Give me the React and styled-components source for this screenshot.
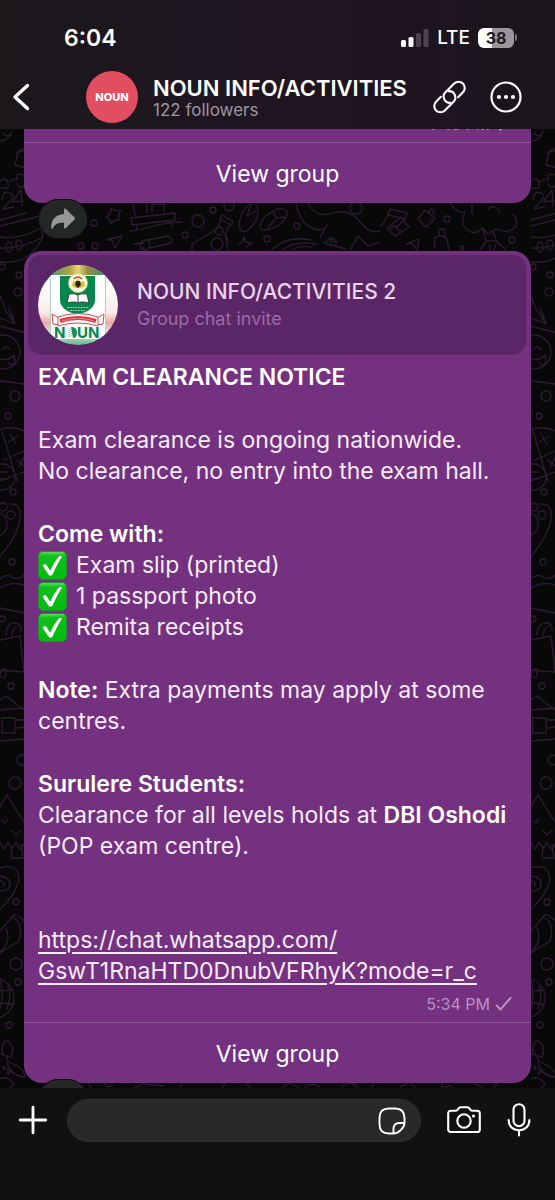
import React from "react";
import styled, { createGlobalStyle } from "styled-components";

const GlobalStyle = createGlobalStyle`
  *, *::before, *::after { box-sizing: border-box; }
  body {
    margin: 0;
    background: #111111;
    font-family: Inter, "Liberation Sans", sans-serif;
    color: #ffffff;
  }
  p, h1, h2 { margin: 0; }
`;

const Screen = styled.div`
  display: flex;
  flex-direction: column;
  height: 100vh;
  overflow: hidden;
`;

const TopBar = styled.header`
  flex: none;
  background: linear-gradient(90deg, #1b171b 0%, #1d161f 30%, #1e1420 70%, #1b151c 100%);
`;

const StatusBar = styled.div`
  display: flex;
  align-items: center;
  height: 70px;
  padding: 5px 38px 0 64px;
`;

const Clock = styled.time`
  flex: 1;
  font-size: 23px;
  line-height: 28px;
  font-weight: 600;
`;

const Network = styled.span`
  margin: 0 8px;
  font-size: 19px;
  line-height: 24px;
  font-weight: 500;
`;

const Battery = styled.div`
  width: 36px;
  height: 20px;
  border-radius: 6px;
  background: linear-gradient(90deg, #ffffff 38%, #9b969c 38%);
  color: #1e1820;
  font-size: 16px;
  line-height: 20px;
  font-weight: 700;
  text-align: center;
`;

const BatteryTip = styled.span`
  width: 2px;
  height: 7px;
  margin-left: 1px;
  border-radius: 0 2px 2px 0;
  background: #77717a;
`;

const ChannelBar = styled.div`
  display: flex;
  align-items: center;
  height: 59px;
  padding: 0 32px 5px 8px;
`;

const IconButton = styled.button`
  display: flex;
  align-items: center;
  justify-content: center;
  flex: none;
  width: ${(p) => p.$width || 34}px;
  height: 34px;
  padding: 0;
  border: 0;
  background: none;
  color: #ffffff;
  cursor: pointer;
`;

const ChannelAvatar = styled.div`
  flex: none;
  width: 52px;
  height: 52px;
  margin: 0 15px 0 52px;
  border-radius: 50%;
  background: #e04e60;
  font-size: 11px;
  line-height: 52px;
  font-weight: 800;
  text-align: center;
`;

const ChannelInfo = styled.div`
  flex: 1;
  min-width: 0;
  padding-top: 2px;
  white-space: nowrap;
`;

const ChannelName = styled.h1`
  font-size: 22px;
  line-height: 24px;
  font-weight: 600;
`;

const Followers = styled.p`
  font-size: 17px;
  line-height: 20px;
  color: #9d979f;
`;

const ChannelActions = styled.div`
  display: flex;
  gap: 22px;
`;

const Chat = styled.main`
  display: grid;
  flex: 1;
  min-height: 0;
  overflow: hidden;
  background: #080808;
`;

const Wallpaper = styled.svg`
  grid-area: 1 / 1;
  width: 100%;
  height: 100%;
`;

const Thread = styled.div`
  grid-area: 1 / 1;
  z-index: 1;
  min-width: 0;
  height: 0;
  margin-top: -22px;
  padding: 0 24px;
`;

const Bubble = styled.article`
  overflow: hidden;
  border-radius: ${(p) => (p.$continued ? "0 0 18px 18px" : "18px")};
  background: #733180;
`;

const InviteCard = styled.div`
  display: flex;
  align-items: center;
  gap: 19px;
  height: 100px;
  margin: 4px 5px 0 4px;
  padding: 0 10px;
  border-radius: 14px;
  background: #5b2667;
`;

const InviteName = styled.h2`
  font-size: 21px;
  line-height: 28px;
  font-weight: 500;
  color: #e8d5ec;
`;

const InviteKind = styled.p`
  font-size: 18px;
  line-height: 26px;
  color: #9b6aa6;
`;

const MessageBody = styled.div`
  display: flex;
  flex-direction: column;
  gap: 32px;
  padding: 7px 14px 0;
  font-size: 23px;
  line-height: 31px;
  color: #f8ecfa;

  strong { font-weight: 600; color: #ffffff; }
`;

const CheckList = styled.ul`
  margin: 0;
  padding: 0;
  list-style: none;
`;

const CheckItem = styled.li`
  display: flex;
  align-items: center;
  gap: 9px;
`;

const InviteLink = styled.a`
  margin-top: 31px;
  color: inherit;
  text-decoration: underline;
  text-decoration-thickness: 2px;
  text-underline-offset: 4px;
`;

const Meta = styled.div`
  display: flex;
  align-items: center;
  justify-content: flex-end;
  gap: 5px;
  height: 35px;
  padding: 0 19px 2px;
  font-size: 16px;
  line-height: 20px;
  color: #ba91c3;
`;

const ViewGroup = styled.button`
  display: block;
  width: 100%;
  height: 61px;
  padding: 1px 0 0;
  border: 0;
  border-top: 1px solid #8b5597;
  background: none;
  color: #ffffff;
  font: inherit;
  font-size: 23px;
  line-height: 28px;
  cursor: pointer;
`;

const ForwardButton = styled.button`
  display: flex;
  align-items: center;
  justify-content: center;
  width: 50px;
  height: 40px;
  margin: -4px 0 12px 14px;
  padding: 0;
  border: 1px solid #120c13;
  border-radius: 20px;
  background: #222624;
  color: #979797;
  cursor: pointer;
`;

const Composer = styled.form`
  display: flex;
  flex: none;
  align-items: flex-start;
  height: 112px;
  padding: 11px 18px 0 16px;
  background: #111111;
`;

const ComposerTool = styled(IconButton)`
  height: 42px;
`;

const InputPill = styled.div`
  display: flex;
  flex: 1;
  align-items: center;
  min-width: 0;
  height: 43px;
  margin: 0 26px 0 17px;
  padding: 0 13px 0 20px;
  border: 1px solid #303030;
  border-radius: 22px;
  background: #292929;
`;

const MessageInput = styled.input`
  flex: 1;
  min-width: 0;
  padding: 0;
  border: 0;
  outline: 0;
  background: none;
  color: #ffffff;
  font: inherit;
  font-size: 21px;
`;

const MicSlot = styled.div`
  margin-left: 20px;
`;

function Doodles() {
  return (
    <Wallpaper aria-hidden="true">
      <defs>
        <pattern id="doodles" width="531" height="959" patternUnits="userSpaceOnUse">
          <g transform="translate(0 -129)" fill="none" stroke="#2b1a30" strokeWidth="1.3" strokeLinecap="round" strokeLinejoin="round">
            {/* Left edge, repeated on the right by the tile */}
            <path d="M0 141q9 0 12-10M3 133q4 5 8 1M16 153l8-5M15 165l3-13 10-2M15 165l12 3" />
            <path d="M0 181q6-5 8 2t-7 5M8 182l10-4M17 180q-2-8 7-5M17 184q4 6 8 1" />
            <path d="M2 199q1-9 8-6 6 3-1 9l-6 7 10-2M21 190l-9 12 11-1M21 190l1 16" />
            <path d="M0 220l26-7M0 226l40-10M0 248q22 1 43-11l-2-9q-22 12-41 9" />
            <ellipse cx="9" cy="247" rx="3" ry="5" /><ellipse cx="19" cy="245" rx="3" ry="5" />
            <path d="M0 262q29 3 42-23" />
            <circle cx="2" cy="267" r="3" /><circle cx="19" cy="275" r="3" /><circle cx="18" cy="292" r="4" />
            <path d="M0 295q3 10 6 16l8 12-5-15M0 318l15 6-3-10M0 326l26 7" />
            <circle cx="3" cy="352" r="17" /><path d="M2 350q5-6 8 0M0 359q9 2 14-4l1 7q-3 6-7 0" />
            <path d="M0 381q12 1 24 3" />
            <circle cx="15" cy="396" r="5" /><circle cx="8" cy="416" r="3" />
            <path d="M0 430q10-5 24 1M2 431l15 50M4 460l20-9M0 481l24-9M8 442l10-6M10 434l6 10M17 460l7 6M24 457l-5 10" />
            <circle cx="2" cy="477" r="13" /><path d="M0 472h7M0 479h8" />
            <circle cx="13" cy="492" r="3" /><circle cx="3" cy="507" r="4" /><circle cx="11" cy="515" r="4" />
            <path d="M0 513q8 4 7 12-1 8-7 10M9 504q15-1 10 20-5 17-19 32" />
            <circle cx="12" cy="562" r="3" />
            <path d="M0 579q6-6 12-2t12-2M0 588q11-7 24-3M0 608l24 5" />
            <circle cx="2" cy="619" r="3" />
            <path d="M6 635q1-13 10-12 6 1 5 8M12 636q0-8 6-10M0 640l20-4 4 36-24-2M0 674q7-10 6-1t-6 2" />
            <circle cx="11" cy="686" r="3" />
            <path d="M0 700l6-4 18 14M0 710l24-2M2 718h13v15H2zM15 720h9M17 728l7-1M0 741l24-2" />
            <circle cx="22" cy="760" r="5" /><circle cx="15" cy="783" r="6" />
            <path d="M0 807l7-12 17 27M2 820q4 6 5-1M12 831l4 4 5-5M0 842l4 7 4-7 4 7 4-7 4 7 4-5M12 847l-1 11h12l-2-13" />
            <path d="M0 868q18-6 19 12-4 16-19 29M0 876q10 1 10 8t-10 7M0 881q5 1 4 5" />
            <circle cx="16" cy="902" r="3" />
            <path d="M0 931l12-14q3-6 12 4M6 928q6 14-6 24M12 917q12 5 7 24l-19 12" />
            <circle cx="16" cy="964" r="6" /><circle cx="18" cy="982" r="3" />
            <circle cx="-6" cy="998" r="20" /><path d="M0 980q5 17-2 34M0 991l13-1M0 1003l12 1M8 986q4 11-1 23" />
            <circle cx="9" cy="1025" r="3" />
            <path d="M6 1040q10 5 5 17l-7-2q-5-8 2-15zM0 1054q7 0 8 8 16 5 17 15-14-1-18-14M0 1079q8-4 14 5l-4 4M7 1069q10 8 17 8" />
            <circle cx="4" cy="1068" r="1" /><circle cx="8" cy="1073" r="1" />

            {/* Strip between the messages */}
            <path d="M111 208q4 4 10 2-4 6-1 10-6-1-9 4-1-6-5-7 5-2 5-9zM107 240l15-4-7 12-3-8z" />
            <circle cx="94" cy="223" r="3" /><circle cx="81" cy="246" r="3" /><circle cx="95" cy="246" r="3" />
            <path d="M133 204l2 11M131 218l44-5v7l-43 5zM137 225l-1 6M170 221l2 6M130 231q14-2 24-5t28-4M147 204v9M152 212v-8h12v7" />
            <path d="M148 240l20-4q6 3 3 7l-21 5M134 244l10-1M140 249l4-1" />
            <circle cx="145" cy="245" r="5" />
            <circle cx="198" cy="221" r="6" /><circle cx="213" cy="210" r="3" /><circle cx="185" cy="235" r="3" />
            <path d="M222 215l11 6-2 4-11-6zM221 220l-4 9M230 225l-5 9 4 8M214 231l-22 13v6M225 234l3 16" />
            <circle cx="219" cy="231" r="4" /><circle cx="217" cy="244" r="6" /><circle cx="229" cy="206" r="5" />
            <path d="M256 205q7 12-9 26-8 3-8-9 4-15 12-18M251 204l-4 12 9-5" />
            <path d="M260 226q3-12 18-17 12-2 8 8-6 11-20 13-6 1-6-4zM273 211l3 7 10-1M276 218l-8 10M239 244l4-3 1-4 2 5 6 1-6 4" />
            <circle cx="267" cy="239" r="3" /><circle cx="297" cy="226" r="3" />
            <path d="M296 204q5 24 23 26 8-1 8-5M308 204q10 16 28 8 15-3 28 14 8 8 16 5M327 225l-7 13M272 250q15-15 38-10M282 250q14-10 34-6M292 250q8-5 20-3M325 243l5-5 6 3v4M324 243l22 6M350 250l8-14 10 10 12-4" />
            <circle cx="356" cy="208" r="6" /><circle cx="332" cy="240" r="2" />
            <path d="M390 209l17 4-2 6-17-4zM388 215l-7 12M405 219l-8 8M387 228l14-11 8 10-14 9zM390 229q4-5 7-1t4 2" />
            <path d="M425 210l10 8-9 9-8-8zM429 214q0-7 4-4l1 4M406 244l13-5-2 11-5-7zM435 247l-1-9q7-5 13 1l2 11M439 235v-6h5l1 7" />
            <circle cx="447" cy="219" r="3" /><circle cx="462" cy="248" r="2" />
            <path d="M451 204q7 10 14 8-6 14 3 18 7 6 14-2l6 6 8-5q13 6 20-3 2-9-4-12M472 204v10M488 209q8-6 12 4M483 228l3 14-6 8M493 232l4 10 9 8M486 241h10M489 245l2 5M496 244l-2 6" />
            <circle cx="512" cy="240" r="3" />

            {/* Strip under the last message */}
            <path d="M88 1082l3 6M104 1083q3 6 9 2M134 1088l10-4 20 2M180 1088l3-7M222 1088l5-7M243 1081l8 7M282 1087l9-4 8 5M305 1087q7-5 15 0M342 1087q9-8 16 1M372 1087l2-4M400 1087l10-5 5 5M442 1083v5l8-2 3 2M475 1084l8 4M493 1088l5-5" />
          </g>
        </pattern>
      </defs>
      <rect width="100%" height="100%" fill="url(#doodles)" />
    </Wallpaper>
  );
}

function SignalIcon() {
  return (
    <svg width="29" height="18" viewBox="0 0 29 18" aria-label="Signal: 2 of 4 bars">
      <rect x="1" y="11" width="5" height="7" rx="1.6" fill="#fff" />
      <rect x="8.5" y="8" width="5" height="10" rx="1.6" fill="#fff" />
      <rect x="16" y="4" width="5" height="14" rx="1.6" fill="#4a434d" />
      <rect x="23.5" y="0" width="5" height="18" rx="1.6" fill="#4a434d" />
    </svg>
  );
}

function BackIcon() {
  return (
    <svg width="26" height="30" viewBox="0 0 26 30" fill="none" stroke="currentColor" strokeWidth="3.4" strokeLinecap="round" strokeLinejoin="round">
      <path d="M19.5 3.5 7 15l12.500 11.500" />
    </svg>
  );
}

function LinkIcon() {
  const half = "M6 6.200H12.800A6.200 6.200 0 0 0 12.800-6.200H0.500A6.200 6.200 0 0 0-3.400 4.800";
  return (
    <svg width="34" height="34" viewBox="0 0 34 34" fill="none" stroke="currentColor" strokeWidth="2.1" strokeLinecap="round">
      <g transform="translate(16.500 17) rotate(-45)">
        <path d={half} />
        <path d={half} transform="rotate(180)" />
      </g>
    </svg>
  );
}

function MoreIcon() {
  return (
    <svg width="32" height="32" viewBox="0 0 32 32">
      <circle cx="16" cy="16" r="14.5" fill="none" stroke="currentColor" strokeWidth="2.2" />
      <circle cx="9" cy="16" r="2.1" fill="currentColor" />
      <circle cx="16" cy="16" r="2.1" fill="currentColor" />
      <circle cx="23" cy="16" r="2.1" fill="currentColor" />
    </svg>
  );
}

function ForwardIcon() {
  return (
    <svg width="26" height="22" viewBox="0 0 26 22" fill="currentColor">
      <path d="M14 1.800c0-1.300 1-1.700 1.900-.9l8.700 8.700c.6.600.6 1.300 0 1.900l-8.700 8.500c-.9.900-1.900.4-1.900-.8v-4.500C8.500 14.300 5 15.800 2.900 20.200c-.5 1-1.700.9-1.700-.3C1 12.200 5.400 6.600 14 6.100z" />
    </svg>
  );
}

function CheckMark() {
  return (
    <svg width="29" height="29" viewBox="0 0 29 29" role="img" aria-label="Check">
      <defs>
        <linearGradient id="tick" x1="0" y1="0" x2="0" y2="1">
          <stop offset="0" stopColor="#5fe25a" />
          <stop offset="0.16" stopColor="#12bf1e" />
          <stop offset="1" stopColor="#00bb0c" />
        </linearGradient>
      </defs>
      <rect x="0.5" y="0.5" width="28" height="28" rx="4.5" fill="url(#tick)" stroke="#278a32" />
      <path d="M5 14c1.400-1.200 3-.9 4 .7l3.200 5.100C14.500 14.500 17.300 9.800 20.600 5.700c.9-1.100 4-1 3.200.3-3.700 5.700-6.700 11.600-9.200 17.600-.8 1.400-3.200 1.400-4.100.1L4.800 15c-.2-.4-.1-.8.2-1z" fill="#fff" />
    </svg>
  );
}

function SentIcon() {
  return (
    <svg width="17" height="16" viewBox="0 0 17 16" fill="none" stroke="currentColor" strokeWidth="2" strokeLinecap="round">
      <path d="M1.5 9.500l4 4L15.500 2" />
    </svg>
  );
}

function PlusIcon() {
  return (
    <svg width="30" height="30" viewBox="0 0 30 30" fill="none" stroke="currentColor" strokeWidth="2.8" strokeLinecap="round">
      <path d="M15 2.200v25.600M2.200 15h25.600" />
    </svg>
  );
}

function StickerIcon() {
  return (
    <svg width="28" height="28" viewBox="0 0 28 28" fill="none" stroke="currentColor" strokeWidth="1.9" strokeLinejoin="round">
      <path d="M16 26.500h-5c-6.500 0-9.500-3-9.500-9.500v-6C1.500 4.500 4.500 1.500 11 1.500h6c6.500 0 9.500 3 9.500 9.500v5c0 4.500-6 10.500-10.500 10.500z" />
      <path d="M15.500 26.400V22c0-4 2-6 6-6h4.800" />
    </svg>
  );
}

function CameraIcon() {
  return (
    <svg width="34" height="28" viewBox="0 0 34 28" fill="none" stroke="currentColor" strokeWidth="2.1" strokeLinejoin="round">
      <path d="M3.800 4.800h4.700c1 0 1.500-.3 2.200-1.200l1-1.300c.6-.7 1-1 2-1h6.600c1 0 1.400.3 2 1l1 1.300c.7.900 1.200 1.200 2.200 1.200h4.700c1.600 0 2.600 1 2.600 2.600v16c0 1.700-1 2.600-2.600 2.600H3.800c-1.600 0-2.600-.9-2.600-2.600v-16c0-1.600 1-2.600 2.600-2.600z" />
      <circle cx="17" cy="15" r="6.7" />
      <circle cx="26.5" cy="10" r="1.6" fill="currentColor" stroke="none" />
    </svg>
  );
}

function MicIcon() {
  return (
    <svg width="24" height="34" viewBox="0 0 24 34" fill="none" stroke="currentColor" strokeWidth="2.1" strokeLinecap="round">
      <rect x="6.5" y="1.2" width="11" height="22" rx="5.5" />
      <path d="M1.600 17c0 6.400 4.400 10.300 10.400 10.300S22.400 23.400 22.400 17M12 27.500v5" />
    </svg>
  );
}

function GroupLogo() {
  return (
    <svg width="80" height="80" viewBox="0 0 80 80" role="img" aria-label="NOUN group picture">
      <defs>
        <clipPath id="round"><circle cx="40" cy="40" r="40" /></clipPath>
        <linearGradient id="top" x1="0" y1="0" x2="1" y2="0">
          <stop offset="0.2" stopColor="#5c9a62" /><stop offset="0.4" stopColor="#b5a540" />
          <stop offset="0.5" stopColor="#e4d779" /><stop offset="0.62" stopColor="#9a8a45" />
          <stop offset="0.8" stopColor="#3e9462" />
        </linearGradient>
        <linearGradient id="side" x1="0" y1="0" x2="0" y2="1">
          <stop offset="0" stopColor="#d7eadd" /><stop offset="0.3" stopColor="#fbfdfb" />
          <stop offset="0.6" stopColor="#fae9e8" /><stop offset="0.72" stopColor="#e9aaaa" />
          <stop offset="0.85" stopColor="#d9e6d8" /><stop offset="1" stopColor="#69b88a" />
        </linearGradient>
      </defs>
      <g clipPath="url(#round)">
        <rect width="80" height="80" fill="url(#side)" />
        <rect width="80" height="10" fill="url(#top)" />
        <rect x="12" y="10" width="56" height="64" fill="#fdfefd" />
        <path d="M12.500 10v64M67.500 10v64" stroke="#b7cfc0" />
        <path d="M22 11h35v24c0 8-8 12.500-17.500 14.500C30 47.500 22 43 22 35z" fill="#078650" />
        <circle cx="40" cy="18" r="9.5" fill="#fcf9e5" stroke="#ccd36b" strokeWidth="0.8" />
        <path d="M34 21l1-5 3 1 2-4 2 4 4-1 1 5-4 2h-6z" fill="#d3c33f" />
        <path d="M38 16h4l1 4-3 3-3-3z" fill="#2d221e" />
        <path d="M36 14q4-4 8 0" fill="none" stroke="#c84539" strokeWidth="1.4" />
        <path d="M31 29q6-1 9 1 3-2 9-1l2 9q-8-2-11 0-3-2-11 0z" fill="#fafafa" stroke="#2b3933" strokeWidth="0.9" />
        <path d="M40 30v8" stroke="#3b4741" />
        <path d="M29 42.500h22M32 45.500h15" stroke="#9cc9ae" strokeWidth="1.2" strokeDasharray="2 0.7" />
        <path d="M21 53l-7-4 1 10 7 1zM59 53l7-4-1 10-7 1z" fill="#fff" stroke="#cf4a50" />
        <path d="M20 52q20-7 40 0v9q-20-6-40 0z" fill="#fff" stroke="#cf4a50" />
        <path d="M22 56q18-6 36 0" fill="none" stroke="#db3b42" strokeWidth="4" />
        <path d="M24 56q16-5 32 0" fill="none" stroke="#f3b2b1" strokeWidth="1" strokeDasharray="1.5 0.8" />
        <g fill="#078650" fontFamily="Inter, sans-serif" fontSize="15" fontWeight="700">
          <text x="16" y="73">N</text>
          <text x="39" y="73">UN</text>
        </g>
        <path d="M29 62h4q6 0 6 5.500t-6 5.500h-4z" fill="#fff" />
        <path d="M33 62q6 0 6 5.500t-4 5.500z" fill="#17905d" />
        <path d="M31 63v9M33 64v8" stroke="#819e8c" strokeDasharray="1 1" />
      </g>
    </svg>
  );
}

export default function App() {
  return (
    <Screen>
      <GlobalStyle />
      <TopBar>
        <StatusBar>
          <Clock>6:04</Clock>
          <SignalIcon />
          <Network>LTE</Network>
          <Battery aria-label="Battery 38 percent">38</Battery>
          <BatteryTip />
        </StatusBar>
        <ChannelBar>
          <IconButton $width={26} type="button" aria-label="Back"><BackIcon /></IconButton>
          <ChannelAvatar>NOUN</ChannelAvatar>
          <ChannelInfo>
            <ChannelName>NOUN INFO/ACTIVITIES</ChannelName>
            <Followers>122 followers</Followers>
          </ChannelInfo>
          <ChannelActions>
            <IconButton type="button" aria-label="Copy link"><LinkIcon /></IconButton>
            <IconButton type="button" aria-label="More"><MoreIcon /></IconButton>
          </ChannelActions>
        </ChannelBar>
      </TopBar>

      <Chat>
        <Doodles />
        <Thread>
          <Bubble $continued>
            <Meta>4:45 PM <SentIcon /></Meta>
            <ViewGroup type="button">View group</ViewGroup>
          </Bubble>
          <ForwardButton type="button" aria-label="Forward"><ForwardIcon /></ForwardButton>

          <Bubble>
            <InviteCard>
              <GroupLogo />
              <div>
                <InviteName>NOUN INFO/ACTIVITIES 2</InviteName>
                <InviteKind>Group chat invite</InviteKind>
              </div>
            </InviteCard>
            <MessageBody>
              <p><strong>EXAM CLEARANCE NOTICE</strong></p>
              <p>
                Exam clearance is ongoing nationwide.
                <br />
                No clearance, no entry into the exam hall.
              </p>
              <div>
                <p><strong>Come with:</strong></p>
                <CheckList>
                  {["Exam slip (printed)", "1 passport photo", "Remita receipts"].map((item) => (
                    <CheckItem key={item}><CheckMark />{item}</CheckItem>
                  ))}
                </CheckList>
              </div>
              <p><strong>Note:</strong> Extra payments may apply at some centres.</p>
              <p>
                <strong>Surulere Students:</strong>
                <br />
                Clearance for all levels holds at <strong>DBI Oshodi</strong> (POP exam centre).
              </p>
              <InviteLink href="https://chat.whatsapp.com/GswT1RnaHTD0DnubVFRhyK?mode=r_c">
                https://chat.whatsapp.com/<wbr />GswT1RnaHTD0DnubVFRhyK?mode=r_c
              </InviteLink>
            </MessageBody>
            <Meta>5:34 PM <SentIcon /></Meta>
            <ViewGroup type="button">View group</ViewGroup>
          </Bubble>
          <ForwardButton type="button" aria-label="Forward"><ForwardIcon /></ForwardButton>
        </Thread>
      </Chat>

      <Composer onSubmit={(e) => e.preventDefault()}>
        <ComposerTool type="button" aria-label="Attach"><PlusIcon /></ComposerTool>
        <InputPill>
          <MessageInput type="text" aria-label="Message" />
          <IconButton $width={30} type="button" aria-label="Stickers"><StickerIcon /></IconButton>
        </InputPill>
        <ComposerTool type="button" aria-label="Camera"><CameraIcon /></ComposerTool>
        <MicSlot>
          <ComposerTool $width={36} type="button" aria-label="Record voice"><MicIcon /></ComposerTool>
        </MicSlot>
      </Composer>
    </Screen>
  );
}
